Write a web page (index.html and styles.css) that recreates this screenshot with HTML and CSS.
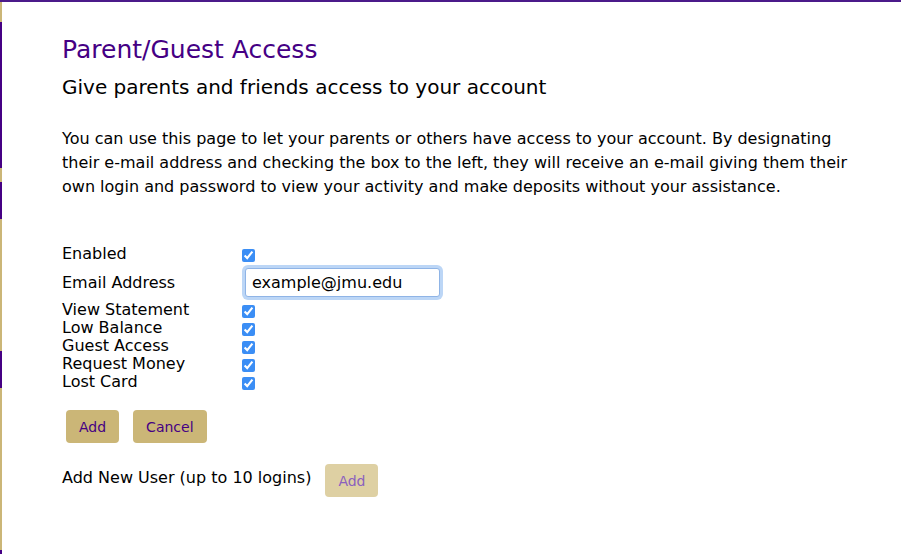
FILE: index.html
```html
<!DOCTYPE html>
<html lang="en">
<head>
    <meta charset="UTF-8">
    <title>Parent/Guest Access</title>
    <link rel="stylesheet" href="styles.css">
</head>
<body>
    <div class="side-stripe">
        <span class="seg gold" style="height: 20px"></span>
        <span class="seg purple" style="height: 147px"></span>
        <span class="seg gold" style="height: 14px"></span>
        <span class="seg purple" style="height: 37px"></span>
        <span class="seg gold" style="height: 132px"></span>
        <span class="seg purple" style="height: 37px"></span>
        <span class="seg gold" style="height: 163px"></span>
        <span class="seg purple" style="height: 4px"></span>
    </div>

    <div class="content">
        <h1>Parent/Guest Access</h1>
        <h2>Give parents and friends access to your account</h2>

        <p class="intro">You can use this page to let your parents or others have access to your account. By designating their e-mail address and checking the box to the left, they will receive an e-mail giving them their own login and password to view your activity and make deposits without your assistance.</p>

        <form class="guest-form">
            <div class="row first">
                <label for="enabled">Enabled</label>
                <input type="checkbox" id="enabled" checked>
            </div>
            <div class="row email-row">
                <label for="email">Email Address</label>
                <input type="email" id="email" class="email" value="example@jmu.edu">
            </div>
            <div class="row">
                <label for="view">View Statement</label>
                <input type="checkbox" id="view" checked>
            </div>
            <div class="row">
                <label for="low">Low Balance</label>
                <input type="checkbox" id="low" checked>
            </div>
            <div class="row">
                <label for="guest">Guest Access</label>
                <input type="checkbox" id="guest" checked>
            </div>
            <div class="row">
                <label for="request">Request Money</label>
                <input type="checkbox" id="request" checked>
            </div>
            <div class="row">
                <label for="lost">Lost Card</label>
                <input type="checkbox" id="lost" checked>
            </div>

            <div class="actions">
                <button type="button" class="btn">Add</button>
                <button type="button" class="btn">Cancel</button>
            </div>
        </form>

        <div class="new-user">
            <span class="new-user-label">Add New User (up to 10 logins)</span>
            <button type="button" class="btn" disabled>Add</button>
        </div>
    </div>
</body>
</html>
```

FILE: styles.css
```css
html, body {
    margin: 0;
    height: 100%;
}
body {
    font-family: "DejaVu Sans", Verdana, sans-serif;
    color: #000;
    background: #fff;
    border-top: 2px solid #4b1a8a;
    box-sizing: border-box;
    display: flex;
}
.side-stripe {
    width: 2px;
    display: flex;
    flex-direction: column;
    flex-shrink: 0;
}
.seg {
    display: block;
}
.gold {
    background-color: #cbb677;
}
.purple {
    background-color: #450084;
}
.content {
    padding: 30px 0 0 60px;
}
h1 {
    margin: 0;
    font-size: 25px;
    font-weight: normal;
    color: #450084;
    line-height: 36px;
}
h2 {
    margin: 2px 0 0;
    font-size: 20px;
    font-weight: normal;
    line-height: 34px;
}
.intro {
    margin: 23px 0 0;
    font-size: 16px;
    line-height: 24px;
    width: 800px;
}
.guest-form {
    margin-top: 45px;
    font-size: 16px;
}
.row {
    display: grid;
    grid-template-columns: 180px auto;
    align-items: center;
    height: 18px;
}
.row label {
    line-height: 18px;
}
.row input[type="checkbox"] {
    margin: 2px 0 0 0;
    width: 13px;
    height: 13px;
    accent-color: #3b8ef5;
}
.row.first {
    height: 20px;
}
.email-row {
    height: 37px;
}
.email {
    width: 195px;
    height: 29px;
    box-sizing: border-box;
    margin-left: 3px;
    padding: 2px 6px;
    font-family: inherit;
    font-size: 16px;
    border: 1px solid #8fb4e6;
    border-radius: 3px;
    box-shadow: 0 0 0 3px #bcd6f6;
    outline: none;
}
.actions {
    display: flex;
    gap: 14px;
    margin: 19px 0 0 4px;
}
.btn {
    font-family: inherit;
    font-size: 14px;
    padding: 0 13px;
    height: 33px;
    background-color: #cbb677;
    color: #450084;
    border: none;
    border-radius: 4px;
}
.btn:disabled {
    background-color: #ded0a3;
    color: #8a5fbf;
}
.new-user {
    display: flex;
    align-items: flex-start;
    gap: 14px;
    margin-top: 18px;
    font-size: 16px;
}
.new-user-label {
    line-height: 33px;
}
.new-user .btn {
    margin-top: 3px;
}
```
